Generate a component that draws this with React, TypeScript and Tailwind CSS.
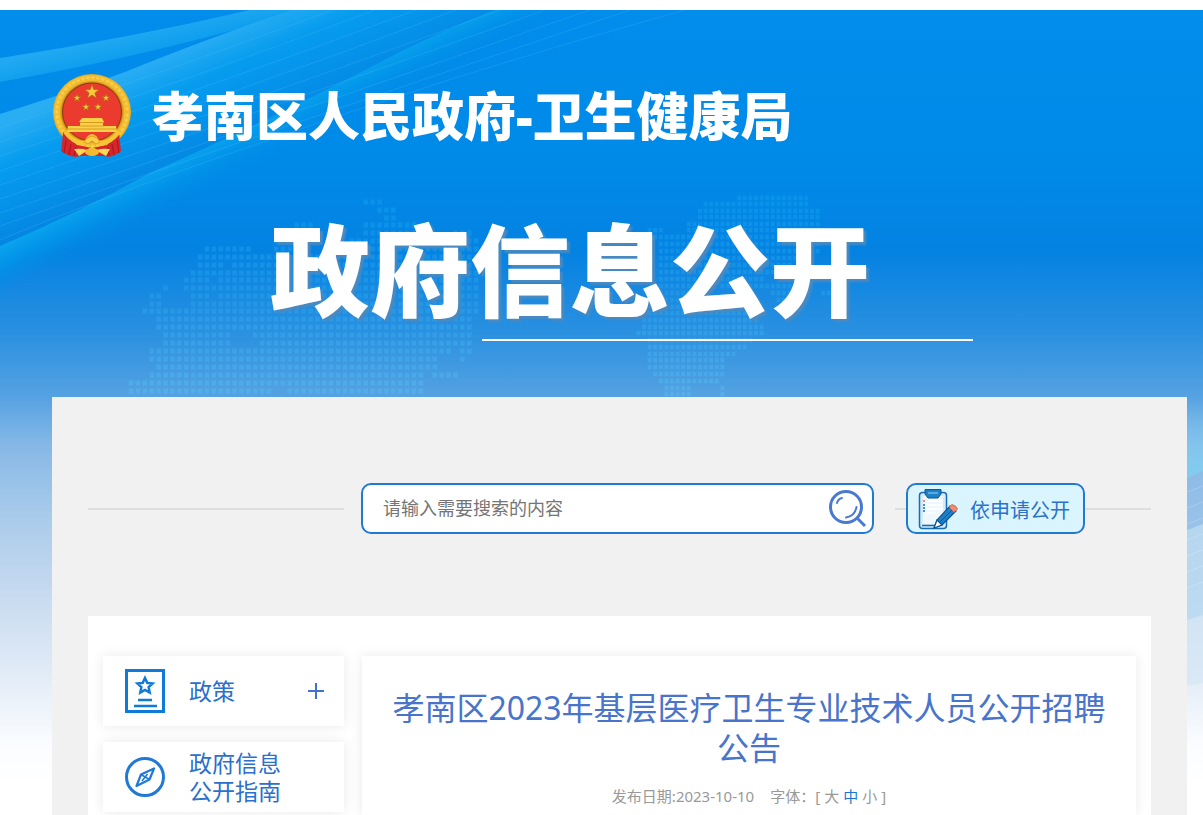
import React, { useState } from 'react';

type DotRow = [number, ...[number, number][]];

// Dotted continents behind the banner title: y followed by the x ranges that are filled
const westRows: DotRow[] = [
  [202, [365, 382]],
  [210, [378, 395]],
  [218, [384, 395]],
  [225, [292, 316], [359, 414]],
  [233, [286, 302], [359, 428], [452, 470]],
  [241, [270, 300], [350, 440], [460, 480]],
  [249, [204, 250], [270, 310], [340, 480]],
  [257, [198, 256], [262, 480]],
  [265, [197, 225], [232, 480]],
  [273, [190, 480]],
  [280, [183, 208], [218, 480]],
  [288, [162, 167], [182, 480]],
  [296, [147, 165], [188, 212], [218, 480]],
  [304, [147, 165], [190, 480]],
  [311, [140, 480]],
  [319, [154, 475]],
  [327, [154, 470]],
  [335, [160, 228], [250, 470]],
  [343, [160, 228], [258, 470]],
  [351, [146, 450], [460, 475]],
  [359, [146, 435], [460, 466]],
  [367, [152, 440]],
  [375, [146, 425], [434, 460]],
  [383, [131, 425]],
  [391, [131, 275], [285, 425]],
];

const eastRows: DotRow[] = [
  [198, [734, 808]],
  [204, [700, 808]],
  [211, [695, 820]],
  [217, [695, 823]],
  [224, [684, 823]],
  [230, [644, 665], [684, 823]],
  [237, [644, 820]],
  [244, [660, 818]],
  [251, [660, 818]],
  [258, [660, 815]],
  [265, [660, 790]],
  [272, [660, 775]],
  [279, [660, 765]],
  [286, [660, 700], [720, 790]],
  [293, [660, 700], [772, 790], [820, 835]],
  [300, [650, 715], [778, 785]],
  [307, [644, 740]],
  [313, [644, 760]],
  [320, [640, 760]],
  [327, [640, 765]],
  [333, [638, 765]],
  [340, [644, 755]],
  [347, [644, 748]],
  [354, [644, 738]],
  [360, [644, 727]],
  [367, [644, 727]],
  [374, [650, 727]],
  [381, [656, 722]],
  [388, [666, 694], [718, 724]],
  [394, [666, 694], [718, 724]],
];

const dotPath = (rows: DotRow[], step: number, w: number, h: number) =>
  rows
    .map(([y, ...ranges]) =>
      (ranges as [number, number][])
        .map(([from, to]) => {
          let d = '';
          for (let x = Math.ceil(from / step) * step; x <= to; x += step) {
            d += `M${(x - w / 2).toFixed(1)} ${y - h / 2}h${w}v${h}h${-w}z`;
          }
          return d;
        })
        .join('')
    )
    .join('');

const starPoints = (cx: number, cy: number, r: number, inner = 0.4) =>
  Array.from({ length: 10 }, (_, i) => {
    const radius = i % 2 ? r * inner : r;
    const a = (Math.PI / 5) * i - Math.PI / 2;
    return `${(cx + radius * Math.cos(a)).toFixed(2)},${(cy + radius * Math.sin(a)).toFixed(2)}`;
  }).join(' ');

const Backdrop: React.FC = () => (
  <svg
    className="absolute inset-x-0 top-0 h-[805px] w-full"
    viewBox="0 10 1203 805"
    preserveAspectRatio="none"
    aria-hidden="true"
  >
    <defs>
      <linearGradient id="sky" gradientUnits="userSpaceOnUse" x1="0" y1="10" x2="0" y2="815">
        <stop offset="0" stopColor="#028ceb" />
        <stop offset="0.2" stopColor="#008ae8" />
        <stop offset="0.3" stopColor="#0482e2" />
        <stop offset="0.4" stopColor="#2a90e0" />
        <stop offset="0.48" stopColor="#55a2e2" />
        <stop offset="0.54" stopColor="#86b8e6" />
        <stop offset="0.63" stopColor="#aacbeb" />
        <stop offset="0.73" stopColor="#c8dbf0" />
        <stop offset="0.84" stopColor="#e6eef8" />
        <stop offset="0.91" stopColor="#fafcff" />
        <stop offset="0.96" stopColor="#ffffff" />
      </linearGradient>
      <linearGradient id="bandTop" gradientUnits="userSpaceOnUse" x1="120" y1="36" x2="127" y2="66">
        <stop offset="0" stopColor="#20a8f2" />
        <stop offset="1" stopColor="#059aec" />
      </linearGradient>
      <linearGradient id="bandMid" gradientUnits="userSpaceOnUse" x1="140" y1="66" x2="190" y2="180">
        <stop offset="0" stopColor="#29adf3" />
        <stop offset="0.3" stopColor="#069cee" />
        <stop offset="0.7" stopColor="#048ee8" />
        <stop offset="1" stopColor="#0480de" />
      </linearGradient>
      <linearGradient id="bandLow" gradientUnits="userSpaceOnUse" x1="160" y1="166" x2="180" y2="206">
        <stop offset="0" stopColor="#0aa5ee" />
        <stop offset="0.4" stopColor="#0297ea" stopOpacity="0.8" />
        <stop offset="1" stopColor="#0288e6" stopOpacity="0" />
      </linearGradient>
      <linearGradient id="dots" gradientUnits="userSpaceOnUse" x1="0" y1="200" x2="0" y2="397">
        <stop offset="0" stopColor="#0ea2f0" />
        <stop offset="0.5" stopColor="#28a4ec" />
        <stop offset="1" stopColor="#58c0f0" />
      </linearGradient>
      <linearGradient id="cyanFade" x1="0" y1="0" x2="0" y2="1">
        <stop offset="0" stopColor="#7fd0f4" stopOpacity="0" />
        <stop offset="1" stopColor="#7fcdf0" stopOpacity="0.9" />
      </linearGradient>
    </defs>
    <rect x="0" y="10" width="1203" height="805" fill="url(#sky)" />

    <path d="M0 58Q130 38 250 10H305Q150 56 0 82Z" fill="url(#bandTop)" />
    <path d="M0 114Q70 92 125 72Q220 34 292 10H494Q440 32 400 52Q270 120 150 173Q80 212 0 246Z" fill="url(#bandMid)" />
    <path d="M0 246Q80 212 150 173Q270 120 400 52Q440 32 494 10H640Q440 70 330 125Q210 190 0 310Z" fill="url(#bandLow)" />
    <g fill="none" stroke="#5cc6ff" strokeOpacity="0.22">
      <path d="M0 128Q180 66 333 10" />
      <path d="M0 142Q200 76 375 10" />
      <path d="M0 156Q220 84 416 10" />
      <path d="M0 171Q240 92 456 10" />
      <path d="M0 185Q250 102 500 10" />
      <path d="M0 199Q250 116 545 10" />
      <path d="M0 213Q250 128 590 10" />
      <path d="M0 226Q260 134 630 10" />
      <path d="M0 240Q90 202 240 150Q460 72 685 10" />
    </g>

    <g fill="url(#dots)" fillOpacity="0.45">
      <path d={dotPath(westRows, 6.9, 4.6, 5)} />
      <path d={dotPath(eastRows, 5.6, 3.8, 4.6)} />
    </g>

    <path d="M1187 400H1203V471L1187 478Z" fill="url(#cyanFade)" />
    <path d="M1187 478L1203 471V615L1187 620Z" fill="#86b7e6" fillOpacity="0.5" />
    <path d="M1187 530L1203 524V615L1187 620Z" fill="#cfe9f6" fillOpacity="0.5" />
    <path d="M1187 620L1203 615V683L1187 686Z" fill="#d4e6f5" fillOpacity="0.6" />
    <g stroke="#ffffff" strokeOpacity="0.2">
      <path d="M1187 492L1203 486M1187 508L1203 502M1187 524L1203 518M1187 540L1203 534M1187 556L1203 550M1187 572L1203 566M1187 588L1203 582" />
    </g>
  </svg>
);

const Emblem: React.FC = () => (
  <svg className="h-[86px] w-20 shrink-0" viewBox="52 72 80 86" aria-hidden="true">
    <defs>
      <radialGradient id="gold" cx="0.5" cy="0.5" r="0.5">
        <stop offset="0.76" stopColor="#b9770c" />
        <stop offset="0.82" stopColor="#f0b429" />
        <stop offset="0.91" stopColor="#fbd34a" />
        <stop offset="1" stopColor="#e8a51c" />
      </radialGradient>
    </defs>
    <ellipse cx="92" cy="111" rx="39" ry="38" fill="url(#gold)" />
    <ellipse cx="92" cy="111" rx="35" ry="34" fill="none" stroke="#dc9618" strokeWidth="3" strokeDasharray="1.5 3.5" opacity="0.35" />
    <ellipse cx="92" cy="111" rx="30" ry="29.5" fill="#8f3d10" />
    <ellipse cx="92" cy="111" rx="29" ry="28.5" fill="#ea3b2e" />
    <path d="M63 131Q62 145 61 150Q67 155 76 156L79 155H105L108 156Q117 154 121 150L119 131L107 144L92 147L77 144Z" fill="#d6262b" />
    <path d="M66 139L64 152M71 143L69 154M76 146L74 155M117 139L119 152M112 143L114 154M108 146L109 155" stroke="#a81422" strokeWidth="1" />
    <g fill="#f7c93d" stroke="#a76a10" strokeWidth="0.6">
      <polygon points={starPoints(92, 91, 7.5)} />
      <polygon points={starPoints(77, 97, 4)} />
      <polygon points={starPoints(106, 97, 4)} />
      <polygon points={starPoints(86, 106, 4)} />
      <polygon points={starPoints(98, 106, 4)} />
    </g>
    <path d="M82 117H102L104 121H103V125H116L117 131H67L68 125H80V121H79Z" fill="#fbd14a" />
    <path d="M80 121.500H104M80 125H104M67 128H117" stroke="#d99a1e" strokeWidth="1" />
    <path d="M65 131Q76 145 87 141Q88 136 92 135Q96 136 97 141Q108 145 119 131" fill="none" stroke="#f6c435" strokeWidth="4" />
    <path d="M84 141L87 137L92 135L97 137L100 141L96 143L92 140L88 143Z" fill="#f9cd45" stroke="#d9961b" strokeWidth="0.800" />
    <path d="M74 148Q82 147 87 149L92 146L97 149Q102 147 110 148L106 155L99 151L92 154L85 151L79 155Z" fill="#fbd957" />
    <ellipse cx="92" cy="151" rx="7" ry="4" fill="#f3ba30" />
  </svg>
);

const SearchIcon: React.FC = () => (
  <svg className="h-10 w-10" viewBox="827 488 40 40" fill="none" stroke="#4a79d2" aria-hidden="true">
    <circle cx="846" cy="507" r="15.500" strokeWidth="3" />
    <path d="M837 503Q838 499 842 498" strokeWidth="2" strokeLinecap="round" />
    <path d="M856.500 507Q855 516 846 517.500" strokeWidth="2" strokeLinecap="round" />
    <path d="M857 518L865 526" strokeWidth="3" />
  </svg>
);

const ClipboardIcon: React.FC = () => (
  <svg className="h-11 w-10 shrink-0" viewBox="918 487 40 44" aria-hidden="true">
    <rect x="919.500" y="492.500" width="27" height="36" rx="3" fill="#d5ebf8" stroke="#176db4" strokeWidth="1.500" />
    <path d="M923 496H943V524H923Z" fill="#eef8fe" />
    <path d="M925 489.500H941V494L938 498H928L925 494Z" fill="#1f80c6" stroke="#0d5796" />
    <path d="M928 493H938" stroke="#6cb8e8" strokeWidth="1.500" />
    <path d="M927 501H943M927 505H942M927 509H943M927 513H935" stroke="#ffffff" strokeWidth="1.500" />
    <path d="M923 501H925" stroke="#f5896b" strokeWidth="2" />
    <path d="M923 505H925M923 508H925M923 511H925" stroke="#176db4" strokeWidth="1.500" />
    <path d="M922 525.500H938" stroke="#176db4" strokeWidth="1.500" />
    <path d="M934 528L937 520L950 506L956 511L942 525Z" fill="#1f7fc7" stroke="#0f5390" strokeWidth="1.200" />
    <path d="M934 528L937 520L942 525Z" fill="#ffffff" stroke="#0f5390" strokeWidth="1.200" />
    <path d="M940 522L953 509" stroke="#0f5390" />
    <path d="M949 507L952 504.500Q957 506 957.500 509L954 512.500Z" fill="#f58b6c" stroke="#b5584a" strokeWidth="0.700" />
  </svg>
);

const PolicyIcon: React.FC = () => (
  <svg className="h-11 w-10 shrink-0" viewBox="0 0 40 44" fill="none" stroke="#0f7ad8" aria-hidden="true">
    <rect x="1.500" y="1.500" width="37" height="41" strokeWidth="3" />
    <polygon points={starPoints(20, 17, 8, 0.48)} strokeWidth="2.500" />
    <path d="M13 31H27M9 37H32" strokeWidth="2.500" />
  </svg>
);

const CompassIcon: React.FC = () => (
  <svg className="h-10 w-10 shrink-0" viewBox="0 0 40 40" fill="none" stroke="#2079d6" aria-hidden="true">
    <circle cx="20" cy="20" r="18.500" strokeWidth="3" />
    <path d="M29 11.500L24.500 22.500L11.500 29L16 17.500Z" strokeWidth="2.200" strokeLinejoin="round" />
    <path d="M16 17.500L24.500 22.500M22.500 17L17 24" strokeWidth="1.500" />
  </svg>
);

const sizes = ['大', '中', '小'];

const App: React.FC = () => {
  const [size, setSize] = useState('中');

  return (
    <div className="min-h-screen bg-white pt-2.5 font-['Noto_Sans','Noto_Sans_CJK_SC',sans-serif]">
      <div className="relative flex min-h-[calc(100vh-10px)] flex-col overflow-hidden">
        <Backdrop />

        {/* Banner */}
        <header className="relative h-[387px] pt-[62px] pl-[52px] text-white">
          <div className="flex items-center gap-5">
            <Emblem />
            <h1 className="text-[52px] leading-[88px] font-black whitespace-nowrap">孝南区人民政府-卫生健康局</h1>
          </div>
          <h2 className="mt-12 pl-[218px] text-[100px] leading-[125px] font-black whitespace-nowrap [text-shadow:3px_3px_2px_#4a8ac0]">
            政府信息公开
          </h2>
          <div className="mt-1.5 ml-[430px] h-0.5 w-[491px] bg-white" />
        </header>

        <main className="relative mr-4 ml-[52px] flex flex-1 flex-col bg-[#f1f1f1] px-9 pt-[86px]">
          {/* Search */}
          <div className="mb-[82px] flex items-center">
            <div className="mr-[17px] h-0.5 flex-1 bg-[#dfdfdf]" />
            <form
              className="flex h-[51px] w-[513px] items-center rounded-[10px] border-2 border-[#2079d3] bg-white pr-[5px] pb-0.5 pl-5"
              onSubmit={(e) => e.preventDefault()}
            >
              <input
                type="text"
                aria-label="请输入需要搜索的内容"
                placeholder="请输入需要搜索的内容"
                className="min-w-0 flex-1 bg-transparent text-lg text-gray-700 placeholder:text-[#757575] focus:outline-none"
              />
              <button type="submit" aria-label="搜索">
                <SearchIcon />
              </button>
            </form>
            <div className="ml-[21px] h-0.5 w-[11px] bg-[#dfdfdf]" />
            <a
              href="#apply"
              className="flex h-[51px] w-[179px] items-center gap-3 rounded-[10px] border-2 border-[#2079d3] bg-[#dbf5ff] pl-2.5 text-xl whitespace-nowrap text-[#2a72cb]"
            >
              <ClipboardIcon />
              <span className="pt-1">依申请公开</span>
            </a>
            <div className="h-0.5 w-[66px] bg-[#dfdfdf]" />
          </div>

          <div className="flex flex-1 gap-[18px] bg-white px-[15px] pt-10">
            {/* Sidebar */}
            <nav className="flex w-[241px] shrink-0 flex-col gap-4 text-[23px] leading-7 text-[#2a70cc]">
              <button
                type="button"
                className="flex h-[70px] items-center bg-white pr-5 pl-[22px] text-left shadow-[0_0_12px_rgba(0,0,0,0.09)]"
              >
                <PolicyIcon />
                <span className="ml-6 flex-1">政策</span>
                <svg className="h-4 w-4" viewBox="0 0 16 16" stroke="#4071ce" strokeWidth="2" aria-hidden="true">
                  <path d="M8 0V16M0 8H16" />
                </svg>
              </button>
              <a
                href="#guide"
                className="flex h-[70px] items-center bg-white pl-[22px] shadow-[0_0_12px_rgba(0,0,0,0.09)]"
              >
                <CompassIcon />
                <span className="ml-6">
                  政府信息
                  <br />
                  公开指南
                </span>
              </a>
            </nav>

            {/* Article */}
            <article className="flex-1 bg-white px-5 pt-8 text-center shadow-[0_0_12px_rgba(0,0,0,0.09)]">
              <h3 className="text-[32px] leading-10 text-[#4874cb]">
                孝南区2023年基层医疗卫生专业技术人员公开招聘公告
              </h3>
              <div className="mt-4 flex justify-center text-[15px] leading-6 text-[#999999]">
                <span>发布日期:2023-10-10</span>
                <span className="ml-4">字体：</span>
                <span className="flex gap-1">
                  [
                  {sizes.map((s) => (
                    <button
                      key={s}
                      type="button"
                      onClick={() => setSize(s)}
                      className={s === size ? 'text-[#1478d4]' : ''}
                    >
                      {s}
                    </button>
                  ))}
                  ]
                </span>
              </div>
            </article>
          </div>
        </main>
      </div>
    </div>
  );
};

export default App;
